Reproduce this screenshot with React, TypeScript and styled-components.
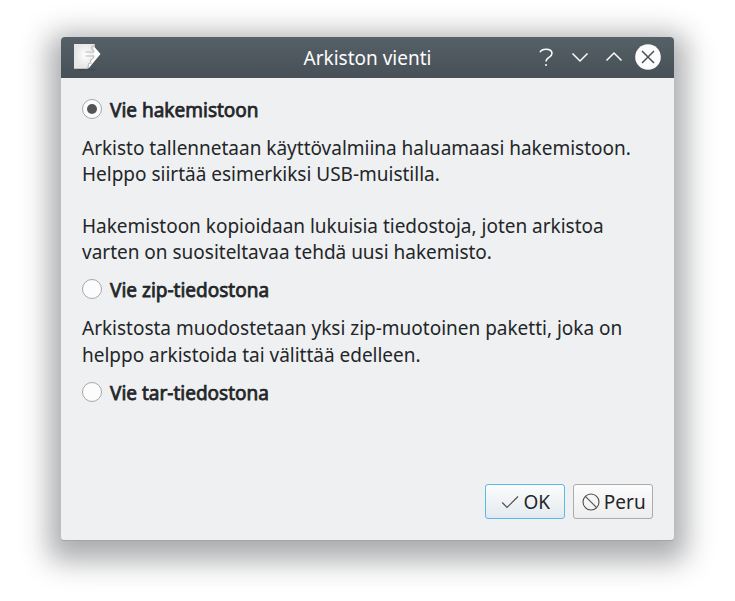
import React from "react";
import styled, { createGlobalStyle } from "styled-components";

const Global = createGlobalStyle`
  * { box-sizing: border-box; }
  body { margin: 0; background: #fff; font-family: "Noto Sans", sans-serif; font-size: 19px; color: #232629; overflow: hidden; }
`;
const Desktop = styled.div`
  width: 735px; height: 601px; padding: 37px 61px 0;
`;
const Window = styled.main`
  width: 613px; height: 503px; display: flex; flex-direction: column;
  background: #eff0f1; border-radius: 4px 4px 3px 3px;
  box-shadow: 0 1px 0 0 #a4a6a8, 0 9px 28px 12px rgba(35,38,41,.38);
`;
const TitleBar = styled.header`
  height: 41px; flex: none; display: grid; grid-template-columns: 128px 1fr 128px; align-items: center;
  padding: 0 12px; color: #fcfcfc; border-radius: 4px 4px 0 0;
  background: linear-gradient(#566067, #475057);
`;
const Title = styled.h1`
  margin: 0; font-size: 19px; font-weight: 400; line-height: 26px; text-align: center; white-space: nowrap;
`;
const Controls = styled.div`display: flex; justify-content: flex-end; gap: 8px; padding: 0 1px 1px 0;`;
const ControlButton = styled.button`
  width: 26px; height: 26px; padding: 0; border: 0; background: none; color: inherit;
  svg { display: block; }
`;
const AppIcon = styled.svg`display: block; width: 30px; height: 30px; margin-bottom: 1px;`;
const Content = styled.section`flex: 1; padding: 19px 21px 0;`;
const Option = styled.label`display: flex; align-items: flex-start; gap: 8px; height: 26px; padding-top: 2px; white-space: nowrap;`;
const OptionName = styled.span`line-height: 26px; margin-top: -2px; -webkit-text-stroke: 0.75px #232629;`;
const Radio = styled.span<{ $on?: boolean }>`
  width: 20px; height: 20px; border: 1px solid #a5a8aa; border-radius: 50%; background: #fcfcfc; display: grid; place-items: center;
  &::after { content: ""; width: 10px; height: 10px; border-radius: 50%; background: ${p => p.$on ? "#535557" : "transparent"}; }
`;
const Description = styled.p<{ $leading?: string }>`
  margin: 12px 0; line-height: ${p => p.$leading ?? "26px"}; white-space: pre; letter-spacing: -0.01px;
`;
const Footer = styled.footer`display: flex; justify-content: flex-end; gap: 8px; padding: 0 21px 21px;`;
const Button = styled.button<{ $primary?: boolean }>`
  width: 80px; height: 35px; font: inherit; color: inherit; display: flex; align-items: center; justify-content: center; gap: 4px; padding: 0 0 0 1.5px;
  border: 1px solid ${p => p.$primary ? "#5cb8e8" : "#a9abad"}; border-radius: 3px;
  background: ${p => p.$primary ? "linear-gradient(#fcfcfc, #e3eaef)" : "linear-gradient(#fcfcfc, #ededee)"};
  svg { flex: none; }
`;

const ExportIcon = () => (
  <AppIcon viewBox="0 0 30 30">
    <defs>
      <radialGradient id="paper" cx="55%" cy="45%">
        <stop offset="0" stopColor="#fff" />
        <stop offset="1" stopColor="#e6e6e6" />
      </radialGradient>
    </defs>
    <path d="M4 27h21l-5 1.500H6z" fill="#394146" opacity=".5" />
    <path d="M1 2h20.700v15l-7 9.700H1z" fill="url(#paper)" />
    <path d="M21.500 5l6 7-12 14.500q-1-2 1-4.500l4-7.500V9.500q-1-2 1-4.500z" fill="#fff" />
    <path d="M21 3.500q-3.500 1.500-2 3.500 2 1 2 3H12.500M12.500 14H21q0 2.500-2.500 3.500-2 1-.5 3.500-3.500 0-2.500 3-.3 1.500-1.500 2" fill="none" stroke="#a9a9a9" strokeWidth="1.100" strokeOpacity=".75" />
  </AppIcon>
);

const line = { fill: "none", stroke: "currentColor", strokeWidth: 1.5 };

export default function App() {
  return <><Global /><Desktop><Window>
    <TitleBar>
      <ExportIcon />
      <Title>Arkiston vienti</Title>
      <Controls>
        <ControlButton aria-label="Ohje"><svg width="26" height="26" {...line}><path d="M7 8.200C8 6 10 5.200 13 5.200c3.500 0 6 1.500 6 4.300 0 4.200-6 3.500-6 8" /><path d="M13 20v2" /></svg></ControlButton>
        <ControlButton aria-label="Pienennä"><svg width="26" height="26" {...line}><path d="M5.500 9.500 13 17l7.500-7.500" /></svg></ControlButton>
        <ControlButton aria-label="Suurenna"><svg width="26" height="26" {...line}><path d="M5.500 16.500 13 9l7.500 7.500" /></svg></ControlButton>
        <ControlButton aria-label="Sulje"><svg width="26" height="26"><circle cx="13" cy="13" r="12.800" fill="#fcfcfc" /><path d="m7 7 12 12M19 7 7 19" stroke="#475057" strokeWidth="1.500" /></svg></ControlButton>
      </Controls>
    </TitleBar>
    <Content>
      <Option><Radio $on /><OptionName>Vie hakemistoon</OptionName></Option>
      <Description>{"Arkisto tallennetaan käyttövalmiina haluamaasi hakemistoon.\nHelppo siirtää esimerkiksi USB-muistilla.\n\nHakemistoon kopioidaan lukuisia tiedostoja, joten arkistoa\nvarten on suositeltavaa tehdä uusi hakemisto."}</Description>
      <Option><Radio /><OptionName>Vie zip-tiedostona</OptionName></Option>
      <Description $leading="26.5px">{"Arkistosta muodostetaan yksi zip-muotoinen paketti, joka on\nhelppo arkistoida tai välittää edelleen."}</Description>
      <Option><Radio /><OptionName>Vie tar-tiedostona</OptionName></Option>
    </Content>
    <Footer>
      <Button $primary><svg width="18" height="18" fill="none" stroke="#4d4d4d" strokeWidth="1.100"><path d="m1.200 9.500 4.800 5L17 3.500" /></svg>OK</Button>
      <Button><svg width="18" height="18" fill="none" stroke="#4d4d4d" strokeWidth="1.100"><circle cx="9" cy="9" r="8" /><path d="m3.400 3.400 11.200 11.200" /></svg>Peru</Button>
    </Footer>
  </Window></Desktop></>;
}
